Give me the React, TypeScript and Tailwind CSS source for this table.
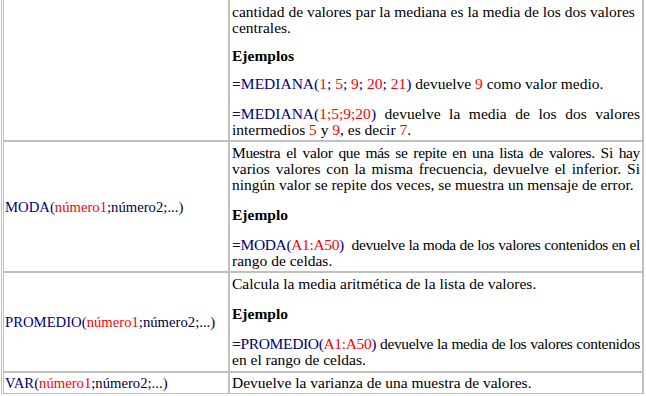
import type { ReactNode } from 'react';

const NAVY = 'text-[#000080]';
const RED = 'text-[#ff0000]';

// one rendered line of a cell; justified lines are stretched to the cell edge
function Line({ children, justify = false, tight = false }: { children: ReactNode; justify?: boolean; tight?: boolean }) {
  let cls = 'whitespace-pre';
  if (justify) cls += ' text-justify [text-align-last:justify]';
  if (tight) cls += ' tracking-[-0.35px]';
  return <div className={cls}>{children}</div>;
}

function Eq() {
  return <span className="font-bold text-[#2a0a66]">=</span>;
}

function R({ children }: { children: ReactNode }) {
  return <span className={RED}>{children}</span>;
}

function N({ children }: { children: ReactNode }) {
  return <span className={NAVY}>{children}</span>;
}

function FnName({ name }: { name: string }) {
  return (
    <span>
      <N>{name}(</N>
      <R>número1</R>
      <span className="text-[#000040]">;número2;...)</span>
    </span>
  );
}

export default function App() {
  const left = 'w-[226px] border border-[#c0c0c0] pl-[1px] align-middle text-[14.7px]';
  const right = 'w-[414px] border border-[#c0c0c0] pl-[2px] pr-[2px] align-top text-[15.5px]';

  return (
    <div className="w-[646px] h-[396px] overflow-hidden bg-white font-['Liberation_Serif',serif] text-[15px] leading-[16px] text-black">
      <div className="ml-[1px] -mt-[4px] w-[643px] border-x border-[#c0c0c0] pl-[1px]">
        <table className="w-[640px] table-fixed border-separate border-spacing-0">
          <colgroup>
            <col className="w-[226px]" />
            <col className="w-[414px]" />
          </colgroup>
          <tbody>
            {/* MEDIANA (row starts above the visible area) */}
            <tr>
              <td className={left}></td>
              <td className={`${right} pt-[7px] pb-[2px]`}>
                <Line>cantidad de valores par la mediana es la media de los dos valores</Line>
                <Line>centrales.</Line>
                <div className="mt-[12px] font-bold">Ejemplos</div>
                <div className="mt-[12px]">
                  <Line>
                    <Eq />
                    <N>MEDIANA(</N>
                    <R>1</R>
                    <N>; </N>
                    <R>5</R>
                    <N>; </N>
                    <R>9</R>
                    <N>; </N>
                    <R>20</R>
                    <N>; </N>
                    <R>21</R>
                    <N>)</N> devuelve <R>9</R> como valor medio.
                  </Line>
                </div>
                <div className="mt-[14px]">
                  <Line justify>
                    <Eq />
                    <N>MEDIANA(</N>
                    <R>1;5;9;20</R>
                    <N>)</N> devuelve la media de los dos valores
                  </Line>
                  <Line>
                    intermedios <R>5</R> y <R>9</R>, es decir <R>7</R>.
                  </Line>
                </div>
              </td>
            </tr>

            {/* MODA */}
            <tr>
              <td className={left}>
                <FnName name="MODA" />
              </td>
              <td className={`${right} pt-[3px] pb-[2px]`}>
                <Line justify tight>Muestra el valor que más se repite en una lista de valores. Si hay</Line>
                <Line justify>varios valores con la misma frecuencia, devuelve el inferior. Si</Line>
                <Line>ningún valor se repite dos veces, se muestra un mensaje de error.</Line>
                <div className="mt-[14px] font-bold">Ejemplo</div>
                <div className="mt-[14px]">
                  <Line justify tight>
                    <Eq />
                    <N>MODA(</N>
                    <R>A1:A50</R>
                    <N>)</N>  devuelve la moda de los valores contenidos en el
                  </Line>
                  <Line>rango de celdas.</Line>
                </div>
              </td>
            </tr>

            {/* PROMEDIO */}
            <tr>
              <td className={left}>
                <FnName name="PROMEDIO" />
              </td>
              <td className={`${right} pt-[3px] pb-[3px]`}>
                <Line>Calcula la media aritmética de la lista de valores.</Line>
                <div className="mt-[14px] font-bold">Ejemplo</div>
                <div className="mt-[14px]">
                  <Line justify tight>
                    <Eq />
                    <N>PROMEDIO(</N>
                    <R>A1:A50</R>
                    <N>)</N> devuelve la media de los valores contenidos
                  </Line>
                  <Line>en el rango de celdas.</Line>
                </div>
              </td>
            </tr>

            {/* VAR */}
            <tr>
              <td className={left}>
                <FnName name="VAR" />
              </td>
              <td className={`${right} pt-[2px] pb-[2px]`}>
                <Line>Devuelve la varianza de una muestra de valores.</Line>
              </td>
            </tr>
          </tbody>
        </table>
      </div>
    </div>
  );
}
